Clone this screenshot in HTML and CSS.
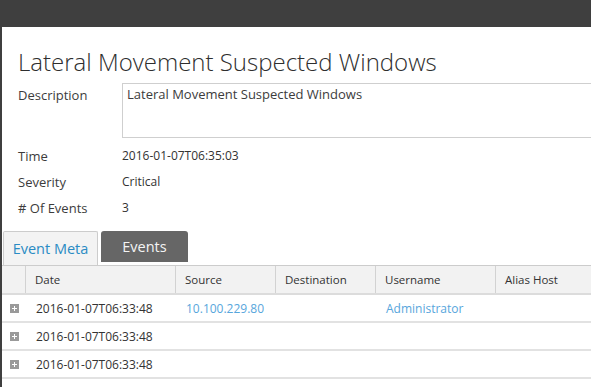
FILE: index.html
```html
<!DOCTYPE html>
<html lang="en">
<head>
  <meta charset="UTF-8" />
  <title>Incident - Lateral Movement Suspected Windows</title>
  <link rel="stylesheet" href="styles.css">
</head>
<body>

  <div class="topbar"></div>

  <div class="main">
    <div class="info">
      <h1 class="title">Lateral Movement Suspected Windows</h1>

      <div class="detail desc-row">
        <div class="label">Description</div>
        <div class="desc-box">Lateral Movement Suspected Windows</div>
      </div>
      <div class="detail">
        <div class="label">Time</div>
        <div class="value">2016-01-07T06:35:03</div>
      </div>
      <div class="detail">
        <div class="label">Severity</div>
        <div class="value">Critical</div>
      </div>
      <div class="detail">
        <div class="label"># Of Events</div>
        <div class="value">3</div>
      </div>
    </div>

    <div class="tabs">
      <div class="tab active">Event Meta</div>
      <div class="tab">Events</div>
    </div>

    <div class="events">
      <div class="row head">
        <div class="cell"></div>
        <div class="cell">Date</div>
        <div class="cell">Source</div>
        <div class="cell">Destination</div>
        <div class="cell">Username</div>
        <div class="cell">Alias Host</div>
      </div>
      <div class="row">
        <div class="cell"><svg class="expand" width="9" height="9" viewBox="0 0 9 9"><rect width="9" height="9" fill="#9a9a9a"/><path d="M2 4.5h5M4.5 2v5" stroke="#fff" stroke-width="1"/></svg></div>
        <div class="cell">2016-01-07T06:33:48</div>
        <div class="cell link">10.100.229.80</div>
        <div class="cell"></div>
        <div class="cell link">Administrator</div>
        <div class="cell"></div>
      </div>
      <div class="row">
        <div class="cell"><svg class="expand" width="9" height="9" viewBox="0 0 9 9"><rect width="9" height="9" fill="#9a9a9a"/><path d="M2 4.5h5M4.5 2v5" stroke="#fff" stroke-width="1"/></svg></div>
        <div class="cell">2016-01-07T06:33:48</div>
        <div class="cell"></div>
        <div class="cell"></div>
        <div class="cell"></div>
        <div class="cell"></div>
      </div>
      <div class="row">
        <div class="cell"><svg class="expand" width="9" height="9" viewBox="0 0 9 9"><rect width="9" height="9" fill="#9a9a9a"/><path d="M2 4.5h5M4.5 2v5" stroke="#fff" stroke-width="1"/></svg></div>
        <div class="cell">2016-01-07T06:33:48</div>
        <div class="cell"></div>
        <div class="cell"></div>
        <div class="cell"></div>
        <div class="cell"></div>
      </div>
    </div>
  </div>

</body>
</html>
```

FILE: styles.css
```css
body {
  margin: 0;
  padding: 0;
  font-family: 'Open Sans', 'Liberation Sans', sans-serif;
  background: #ffffff;
  color: #333;
  overflow: hidden;
}

.topbar {
  height: 27px;
  background-color: #3f3f3f;
}

.main {
  border-left: 2px solid #3f3f3f;
  height: 360px;
  overflow: hidden;
}

.info {
  padding: 0 16px;
}

.title {
  margin: 19px 0 5px;
  font-size: 24px;
  line-height: 32px;
  font-weight: 300;
  color: #2e2e2e;
  white-space: nowrap;
}

.detail {
  display: flex;
  height: 26px;
  line-height: 26px;
}

.detail .label {
  width: 104px;
  flex-shrink: 0;
  font-size: 13px;
  color: #3c3c3c;
}

.detail .value {
  font-size: 12px;
  color: #333;
}

.desc-row {
  height: 55px;
  line-height: 18px;
  margin-bottom: 5px;
}

.desc-row .label {
  padding-top: 3px;
}

.desc-box {
  flex-shrink: 0;
  width: 480px;
  box-sizing: content-box;
  border: 1px solid #cfcfcf;
  padding: 2px 4px;
  height: 49px;
  font-size: 13px;
  line-height: 16px;
  color: #3c3c3c;
}

.tabs {
  display: flex;
  align-items: flex-start;
  gap: 3px;
  margin-top: 10px;
  padding-left: 1px;
}

.tab {
  width: 87px;
  height: 31px;
  line-height: 31px;
  text-align: center;
  font-size: 14.5px;
  background-color: #666;
  color: #f4f4f4;
  border-radius: 3px 3px 0 0;
}

.tab.active {
  width: 93px;
  height: 33px;
  line-height: 33px;
  background-color: #f3f3f3;
  color: #2a8bc4;
  border: 1px solid #cccccc;
  border-bottom: none;
  border-radius: 2px 2px 0 0;
}

.events {
  border-top: 1px solid #cccccc;
}

.row {
  display: grid;
  grid-template-columns: 24px 150px 100px 100px 120px 1fr;
  height: 26px;
  border-bottom: 2px solid #e2e2e2;
  font-size: 12px;
}

.row.head {
  height: 27px;
  background-color: #f2f2f2;
  border-bottom: 2px solid #dcdcdc;
  font-size: 11.5px;
}

.cell {
  display: flex;
  align-items: center;
  padding-left: 10px;
  white-space: nowrap;
  overflow: hidden;
}

.row .cell:first-child {
  padding-left: 8px;
}

.row.head .cell {
  padding-left: 9px;
  border-right: 1px solid #d2d2d2;
}

.row.head .cell:last-child {
  border-right: none;
}

.link {
  color: #57a6dc;
}
```
